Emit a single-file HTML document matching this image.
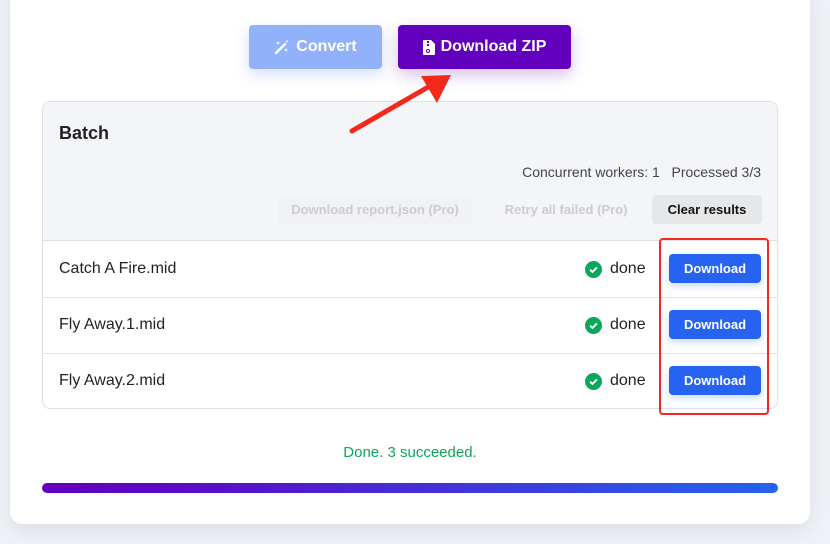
<!DOCTYPE html>
<html><head><style>
body{margin:0;width:830px;height:544px;background:#eef1f5;font-family:"Liberation Sans",sans-serif;position:relative;overflow:hidden}
.card{position:absolute;left:10px;top:-20px;width:800px;height:544px;background:#fff;border-radius:12px;box-shadow:0 6px 20px rgba(0,0,0,.08)}
.btn{position:absolute;border-radius:4px;color:#fff;font-weight:bold;font-size:16px;display:flex;align-items:center;justify-content:center;gap:6px}
.panel{position:absolute;left:42px;top:101px;width:734px;height:306px;border:1px solid #dcdfe4;border-radius:8px;overflow:hidden;background:#fff}
.hdr{position:absolute;left:0;top:0;width:100%;height:138px;background:#f3f5f8;border-bottom:1px solid #dcdfe4}
.row{position:absolute;left:0;width:100%;height:56px;border-bottom:1px solid #e3e5e9;font-size:16px;color:#222}
.row .n{position:absolute;left:16px;top:19px}
.row .d{position:absolute;left:542px;top:19px;display:flex;align-items:center;gap:8px}
.dl{position:absolute;left:626px;top:13px;width:92px;height:29px;background:#2563f0;border-radius:4px;color:#fff;font-weight:bold;font-size:13px;display:flex;align-items:center;justify-content:center;box-shadow:0 3px 8px rgba(37,99,235,.25)}
.sb{position:absolute;top:93px;height:29px;border-radius:4px;font-size:13px;font-weight:bold;display:flex;align-items:center;justify-content:center}
</style></head><body>
<div class="card"></div>
<div class="btn" style="left:249px;top:25px;width:133px;height:44px;background:#91b1fb;box-shadow:0 6px 14px rgba(100,130,250,.25)">
<svg width="16" height="16" viewBox="0 0 16 16"><path d="M2 14L11 5" stroke="#fff" stroke-width="2.4" stroke-linecap="round"/><path d="M4 2l.6 1.4L6 4l-1.4.6L4 6l-.6-1.4L2 4l1.4-.6z M12 9l.6 1.4L14 11l-1.4.6L12 13l-.6-1.4L10 11l1.4-.6z M13 1l.5 1 1 .5-1 .5-.5 1-.5-1-1-.5 1-.5z" fill="#fff"/></svg>Convert</div>
<div class="btn" style="left:398px;top:25px;width:173px;height:44px;background:#6100bd;box-shadow:0 6px 16px rgba(97,0,189,.25)">
<svg width="12" height="15" viewBox="0 0 12 15"><path d="M1 0h7l4 4v10a1 1 0 0 1-1 1H1a1 1 0 0 1-1-1V1a1 1 0 0 1 1-1z" fill="#fff"/><rect x="4" y="1" width="2" height="2" fill="#6100bd"/><rect x="4" y="4" width="2" height="2" fill="#6100bd"/><circle cx="5" cy="11" r="1.5" fill="none" stroke="#6100bd"/></svg>Download ZIP</div>
<div class="panel">
<div class="hdr">
<div style="position:absolute;left:16px;top:21px;font-size:18px;font-weight:bold;color:#222">Batch</div>
<div style="position:absolute;right:16px;top:62px;font-size:14px;color:#444">Concurrent workers: 1&nbsp;&nbsp;&nbsp;Processed 3/3</div>
<div class="sb" style="left:235px;width:194px;color:#ccc;background:#f0f2f5">Download report.json (Pro)</div>
<div class="sb" style="left:446px;width:154px;color:#ccc">Retry all failed (Pro)</div>
<div class="sb" style="left:609px;width:110px;background:#e6e7e9;color:#111">Clear results</div>
</div>
<div class="row" style="top:139px"><span class="n">Catch A Fire.mid</span><span class="d"><svg width="17" height="17" viewBox="0 0 16 16"><circle cx="8" cy="8" r="8" fill="#0ba85a"/><path d="M4.8 8.2l2.2 2.1 4.2-4.3" stroke="#fff" stroke-width="1.8" fill="none"/></svg>done</span><div class="dl">Download</div></div>
<div class="row" style="top:195px"><span class="n">Fly Away.1.mid</span><span class="d"><svg width="17" height="17" viewBox="0 0 16 16"><circle cx="8" cy="8" r="8" fill="#0ba85a"/><path d="M4.8 8.2l2.2 2.1 4.2-4.3" stroke="#fff" stroke-width="1.8" fill="none"/></svg>done</span><div class="dl">Download</div></div>
<div class="row" style="top:251px;border:0"><span class="n">Fly Away.2.mid</span><span class="d"><svg width="17" height="17" viewBox="0 0 16 16"><circle cx="8" cy="8" r="8" fill="#0ba85a"/><path d="M4.8 8.2l2.2 2.1 4.2-4.3" stroke="#fff" stroke-width="1.8" fill="none"/></svg>done</span><div class="dl">Download</div></div>
</div>
<svg style="position:absolute;left:0;top:0;z-index:5" width="830" height="544"><path d="M352 131L430 86" stroke="#f5291b" stroke-width="5" stroke-linecap="round"/><polygon points="421,76 451,75 437,103" fill="#f5291b"/></svg>
<div style="position:absolute;left:659px;top:238px;width:106px;height:173px;border:2px solid #f5291b;border-radius:4px;z-index:5"></div>
<div style="position:absolute;left:0;width:820px;top:444px;text-align:center;font-size:15px;color:#0ba85a">Done. 3 succeeded.</div>
<div style="position:absolute;left:42px;top:483px;width:736px;height:10px;border-radius:5px;background:linear-gradient(90deg,#6100bd,#5a0cc8 20%,#2563f0)"></div>
</body></html>
